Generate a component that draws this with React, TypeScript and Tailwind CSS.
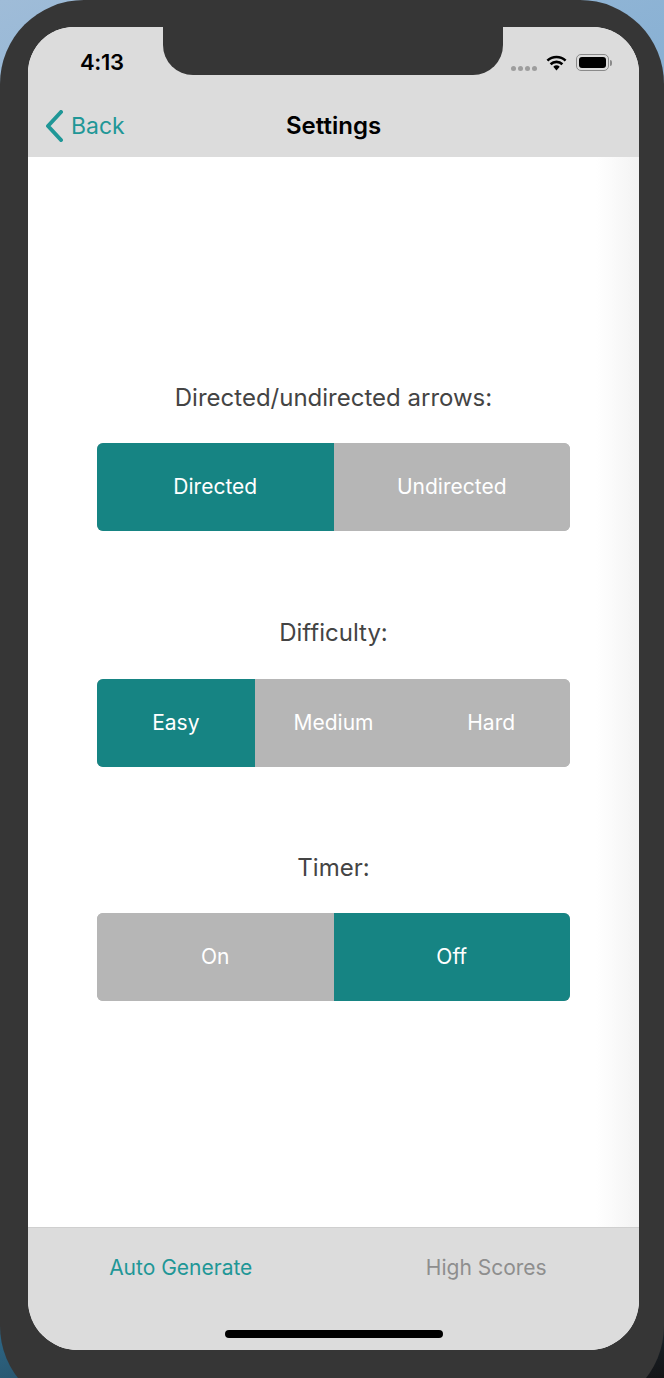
import { useState } from 'react';

type SegmentProps = {
  options: string[];
  selected: number;
  onSelect: (i: number) => void;
};

function Segment({ options, selected, onSelect }: SegmentProps) {
  return (
    <div className="flex h-[88px] w-[473px] overflow-hidden rounded-[6px] bg-[#b6b6b6]">
      {options.map((opt, i) => (
        <button
          key={opt}
          onClick={() => onSelect(i)}
          className={`flex flex-1 items-center justify-center text-[21px] text-white ${
            i === selected ? 'bg-[#168483]' : 'bg-[#b6b6b6]'
          }`}
        >
          {opt}
        </button>
      ))}
    </div>
  );
}

function StatusIcons() {
  return (
    <div className="flex items-center">
      <div className="mr-[9px] mt-[12px] flex gap-[2px]">
        {[0, 1, 2, 3].map((d) => (
          <span key={d} className="h-[5px] w-[5px] rounded-full bg-[#9d9d9d]" />
        ))}
      </div>
      <svg width="21" height="17" viewBox="0 0 21 17" className="mr-[9px]">
        <path d="M10.5 16.5 L7.3 12.8 A4.8 4.8 0 0 1 13.7 12.8 Z" fill="#000" />
        <path d="M4.6 10.2 A8.6 8.6 0 0 1 16.4 10.2" stroke="#000" strokeWidth="2.6" fill="none" />
        <path d="M1.4 6.6 A13.2 13.2 0 0 1 19.6 6.6" stroke="#000" strokeWidth="2.6" fill="none" />
      </svg>
      <div className="flex items-center">
        <div className="flex h-[17px] w-[33px] items-center rounded-[5px] border border-[#8a8a8a] p-[2px]">
          <div className="h-full w-full rounded-[3px] bg-black" />
        </div>
        <div className="ml-[1px] h-[6px] w-[2px] rounded-r-sm bg-[#8a8a8a]" />
      </div>
    </div>
  );
}

export default function App() {
  const [arrows, setArrows] = useState(0);
  const [difficulty, setDifficulty] = useState(0);
  const [timer, setTimer] = useState(1);

  return (
    <div
      className="relative h-[1378px] w-[664px] overflow-hidden bg-[linear-gradient(160deg,#9fbcd8_0%,#6fa4cf_40%,#3f9fd2_70%,#141416_100%)]"
      style={{ fontFamily: 'Inter, "Liberation Sans", sans-serif' }}
    >
      <div className="h-[1410px] w-[664px] rounded-[84px] bg-[#363636] pl-[28px] pt-[27px]">
        <div className="relative flex h-[1323px] w-[611px] flex-col overflow-hidden rounded-t-[46px] rounded-b-[50px] bg-white">
          {/* notch */}
          <div className="absolute left-[135px] top-0 h-[48px] w-[340px] rounded-b-[30px] bg-[#363636]" />

          {/* status + nav */}
          <div className="bg-[#dcdcdc]">
            <div className="flex h-[71px] items-center justify-between pl-[52px] pr-[27px]">
              <span className="text-[22px] font-semibold tracking-[-0.3px] text-black">4:13</span>
              <StatusIcons />
            </div>
            <div className="relative flex h-[59px] items-center justify-center pb-[4px]">
              <button className="absolute left-[17px] top-[11px] flex items-center text-[#1f9797]">
                <svg width="20" height="32" viewBox="0 0 20 32">
                  <path
                    d="M16 2 L3 16 L16 30"
                    stroke="currentColor"
                    strokeWidth="4"
                    fill="none"
                    strokeLinecap="round"
                    strokeLinejoin="round"
                  />
                </svg>
                <span className="ml-[6px] text-[23px]">Back</span>
              </button>
              <span className="text-[24px] font-semibold text-black">Settings</span>
            </div>
          </div>

          {/* content */}
          <div className="flex flex-1 flex-col items-center bg-[linear-gradient(to_right,#ffffff_93%,#f3f3f3)] pt-[226px]">
            <div className="flex h-[30px] items-center text-[24px] text-[#444]">
              Directed/undirected arrows:
            </div>
            <div className="mt-[30px]">
              <Segment options={['Directed', 'Undirected']} selected={arrows} onSelect={setArrows} />
            </div>

            <div className="mt-[87px] flex h-[30px] items-center text-[24px] text-[#444]">Difficulty:</div>
            <div className="mt-[31px]">
              <Segment
                options={['Easy', 'Medium', 'Hard']}
                selected={difficulty}
                onSelect={setDifficulty}
              />
            </div>

            <div className="mt-[86px] flex h-[30px] items-center text-[24px] text-[#444]">Timer:</div>
            <div className="mt-[30px]">
              <Segment options={['On', 'Off']} selected={timer} onSelect={setTimer} />
            </div>
          </div>

          {/* tab bar */}
          <div className="flex h-[123px] flex-col border-t border-[#cfcfcf] bg-[#dcdcdc]">
            <div className="flex h-[80px] items-center pb-[1px]">
              <div className="flex flex-1 justify-center text-[21px] text-[#1f9797]">Auto Generate</div>
              <div className="flex flex-1 justify-center text-[21px] text-[#8e8e8e]">High Scores</div>
            </div>
            <div className="flex flex-1 justify-center pt-[22px]">
              <div className="h-[8px] w-[218px] rounded-full bg-black" />
            </div>
          </div>
        </div>
      </div>
    </div>
  );
}
